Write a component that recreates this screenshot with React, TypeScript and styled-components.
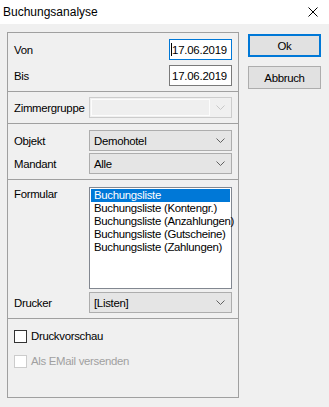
import styled, { createGlobalStyle } from 'styled-components';

const GlobalStyle = createGlobalStyle`
  html, body {
    margin: 0;
    padding: 0;
    background: #f0f0f0;
  }
  * {
    box-sizing: border-box;
  }
`;

const formulare = [
  'Buchungsliste',
  'Buchungsliste (Kontengr.)',
  'Buchungsliste (Anzahlungen)',
  'Buchungsliste (Gutscheine)',
  'Buchungsliste (Zahlungen)',
];

function Chevron({ disabled }: { disabled?: boolean }) {
  return (
    <svg width="9" height="6" viewBox="0 0 9 6">
      <polyline
        points="0.5,0.5 4.5,4.5 8.5,0.5"
        fill="none"
        stroke={disabled ? '#c8c8c8' : '#606060'}
        strokeWidth="1"
      />
    </svg>
  );
}

export default function App() {
  return (
    <Window>
      <GlobalStyle />
      <TitleBar>
        <Title>Buchungsanalyse</Title>
        <CloseIcon width="10" height="10" viewBox="0 0 10 10">
          <line x1="0.5" y1="0.5" x2="9.5" y2="9.5" stroke="#000" strokeWidth="1" />
          <line x1="9.5" y1="0.5" x2="0.5" y2="9.5" stroke="#000" strokeWidth="1" />
        </CloseIcon>
      </TitleBar>
      <Body>
        <Panel>
          <Section $pad="6px 6px 5px" $gap={5}>
            <Row>
              <Label>Von</Label>
              <DateInput $focused>
                <Caret />
                17.06.2019
              </DateInput>
            </Row>
            <Row>
              <Label>Bis</Label>
              <DateInput>17.06.2019</DateInput>
            </Row>
          </Section>
          <Separator />
          <Section $pad="5px 6px 5px" $gap={0}>
            <Row>
              <Label>Zimmergruppe</Label>
              <DisabledCombo>
                <DisabledField />
                <Chevron disabled />
              </DisabledCombo>
            </Row>
          </Section>
          <Separator />
          <Section $pad="6px 6px 5px" $gap={2}>
            <Row>
              <Label>Objekt</Label>
              <Combo>
                <span>Demohotel</span>
                <Chevron />
              </Combo>
            </Row>
            <Row>
              <Label>Mandant</Label>
              <Combo>
                <span>Alle</span>
                <Chevron />
              </Combo>
            </Row>
          </Section>
          <Separator />
          <Section $pad="7px 6px 5px" $gap={3}>
            <TopRow>
              <Label>Formular</Label>
              <ListBox>
                {formulare.map((f, i) => (
                  <ListItem key={f} $selected={i === 0}>
                    {f}
                  </ListItem>
                ))}
              </ListBox>
            </TopRow>
            <Row>
              <Label>Drucker</Label>
              <Combo>
                <span>[Listen]</span>
                <Chevron />
              </Combo>
            </Row>
          </Section>
          <Separator />
          <Section $pad="10px 6px 5px" $gap={11}>
            <CheckRow>
              <CheckBox />
              <span>Druckvorschau</span>
            </CheckRow>
            <CheckRow $disabled>
              <CheckBox $disabled />
              <span>Als EMail versenden</span>
            </CheckRow>
          </Section>
        </Panel>
        <Buttons>
          <Button $default>Ok</Button>
          <Button>Abbruch</Button>
        </Buttons>
      </Body>
    </Window>
  );
}

const Window = styled.div`
  width: 329px;
  height: 407px;
  background: #f0f0f0;
  font-family: 'Liberation Sans', Arial, sans-serif;
  font-size: 11.4px;
  letter-spacing: -0.3px;
  color: #000;
  overflow: hidden;
`;

const TitleBar = styled.div`
  height: 24px;
  background: #fff;
  display: flex;
  align-items: center;
  justify-content: space-between;
  padding: 0 11px 1px 3px;
`;

const Title = styled.span`
  font-size: 12px;
  letter-spacing: 0;
`;

const CloseIcon = styled.svg`
  display: block;
`;

const Body = styled.div`
  display: flex;
  align-items: flex-start;
  padding: 8px 0 0 7px;
  gap: 9px;
`;

const Panel = styled.div`
  width: 232px;
  height: 366px;
  border: 1px solid #a0a0a0;
  display: flex;
  flex-direction: column;
`;

const Section = styled.div<{ $pad: string; $gap: number }>`
  display: flex;
  flex-direction: column;
  padding: ${(p) => p.$pad};
  gap: ${(p) => p.$gap}px;
`;

const Separator = styled.div`
  height: 1px;
  background: #a0a0a0;
`;

const Row = styled.div`
  display: flex;
  align-items: center;
  justify-content: space-between;
  height: 21px;
`;

const TopRow = styled.div`
  display: flex;
  align-items: flex-start;
  justify-content: space-between;
`;

const Label = styled.span`
  padding-top: 1px;
`;

const DateInput = styled.div<{ $focused?: boolean }>`
  position: relative;
  width: 63px;
  height: 21px;
  background: #fff;
  border: 1px solid ${(p) => (p.$focused ? '#0078d7' : '#7a7a7a')};
  display: flex;
  align-items: center;
  padding-left: 2px;
  letter-spacing: -0.2px;
`;

const Caret = styled.span`
  position: absolute;
  left: 1px;
  top: 3px;
  width: 1px;
  height: 13px;
  background: #000;
`;

const Combo = styled.div`
  width: 143px;
  height: 21px;
  background: #e5e5e5;
  border: 1px solid #adadad;
  display: flex;
  align-items: center;
  justify-content: space-between;
  padding: 0 6px 0 4px;
`;

const DisabledCombo = styled.div`
  width: 143px;
  height: 21px;
  background: #f0f0f0;
  border: 1px solid #cccccc;
  display: flex;
  align-items: center;
  justify-content: space-between;
  padding: 1px 6px 1px 1px;
`;

const DisabledField = styled.div`
  width: 119px;
  height: 17px;
  border: 1px solid #fcfcfc;
  background: #efefef;
`;

const ListBox = styled.div`
  width: 143px;
  height: 102px;
  background: #fff;
  border: 1px solid #828790;
  padding: 1px 1px;
`;

const ListItem = styled.div<{ $selected?: boolean }>`
  height: 13px;
  line-height: 13px;
  padding-left: 3px;
  white-space: nowrap;
  background: ${(p) => (p.$selected ? '#0078d7' : 'transparent')};
  color: ${(p) => (p.$selected ? '#fff' : '#000')};
`;

const CheckRow = styled.div<{ $disabled?: boolean }>`
  display: flex;
  align-items: center;
  gap: 4px;
  height: 14px;
  color: ${(p) => (p.$disabled ? '#a0a0a0' : '#000')};
`;

const CheckBox = styled.span<{ $disabled?: boolean }>`
  width: 13px;
  height: 13px;
  background: #fff;
  border: 1px solid ${(p) => (p.$disabled ? '#cccccc' : '#333333')};
`;

const Buttons = styled.div`
  display: flex;
  flex-direction: column;
  gap: 9px;
  padding-top: 2px;
`;

const Button = styled.div<{ $default?: boolean }>`
  width: 73px;
  height: 23px;
  background: #e1e1e1;
  border: ${(p) => (p.$default ? '2px solid #0078d7' : '1px solid #adadad')};
  display: flex;
  align-items: center;
  justify-content: center;
`;
